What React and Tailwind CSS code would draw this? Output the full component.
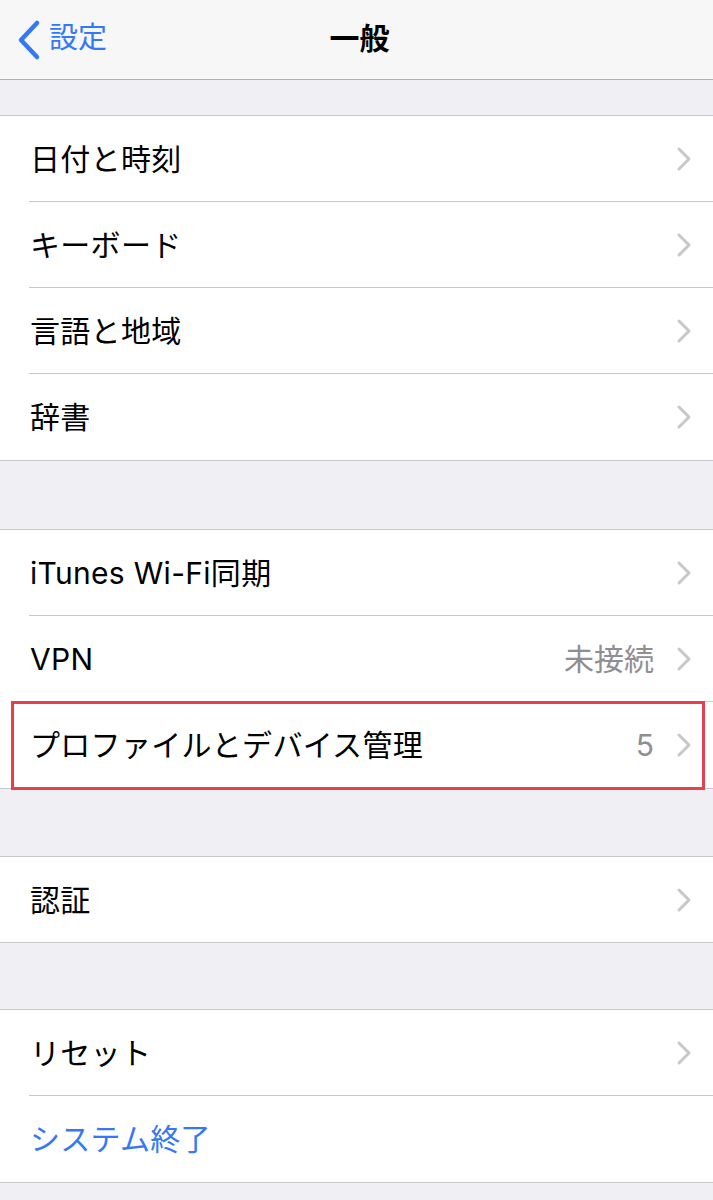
import React from "react";

const font = { fontFamily: '"Inter", "Noto Sans CJK JP", sans-serif' };

function Chevron() {
  return (
    <svg width="16" height="26" viewBox="0 0 16 26" className="shrink-0">
      <path d="M3 3 L13 13 L3 23" fill="none" stroke="#c7c7cc" strokeWidth="3" strokeLinecap="round" strokeLinejoin="round" />
    </svg>
  );
}

function Row({ label, value, last, blue, noChevron, highlight, short }) {
  return (
    <div className="relative pl-[29px]">
      <div className={`flex items-center ${short ? "h-[85px]" : "h-[86px]"} pr-[21px] ${last ? "" : "border-b border-[#c8c7cc]"}`}>
        <span className={`flex-1 pl-[1px] text-[30px] leading-none tracking-[0.3px] ${blue ? "text-[#3478f6]" : "text-black"}`}>{label}</span>
        {value && <span className="text-[30px] leading-none text-[#8e8e93] mr-[22px]">{value}</span>}
        {!noChevron && <Chevron />}
      </div>
      {highlight && (
        <div className="absolute left-[11px] right-[8px] top-[-1px] h-[89px] border-[3px] border-[#e8404b] pointer-events-none" />
      )}
    </div>
  );
}

function Group({ children }) {
  return <div className="bg-white border-y border-[#c8c7cc]">{children}</div>;
}

export default function App() {
  return (
    <div className="w-[713px] h-[1200px] bg-[#efeff4] overflow-hidden" style={font}>
      <div className="relative h-[80px] bg-[#f7f7f7] border-b border-[#b2b2b2] flex items-center">
        <div className="flex items-center pl-[16px]">
          <svg width="26" height="42" viewBox="0 0 26 42">
            <path d="M21 4 L5 21 L21 38" fill="none" stroke="#3478f6" strokeWidth="4.5" strokeLinecap="round" strokeLinejoin="round" />
          </svg>
          <span className="ml-[7px] text-[29px] leading-none text-[#3478f6] -mt-[4px]">設定</span>
        </div>
        <div className="absolute inset-0 flex items-center justify-center">
          <span className="text-[30px] leading-none font-bold text-black -mt-[4px] ml-[6px]">一般</span>
        </div>
      </div>
      <div className="h-[35px]" />
      <Group>
        <Row label="日付と時刻" />
        <Row label="キーボード" />
        <Row label="言語と地域" />
        <Row label="辞書" last />
      </Group>
      <div className="h-[68px]" />
      <Group>
        <Row label="iTunes Wi-Fi同期" />
        <Row label="VPN" value="未接続" />
        <Row label="プロファイルとデバイス管理" value="5" last highlight />
      </Group>
      <div className="h-[67px]" />
      <Group>
        <Row label="認証" last short />
      </Group>
      <div className="h-[66px]" />
      <Group>
        <Row label="リセット" />
        <Row label="システム終了" blue noChevron last />
      </Group>
    </div>
  );
}
